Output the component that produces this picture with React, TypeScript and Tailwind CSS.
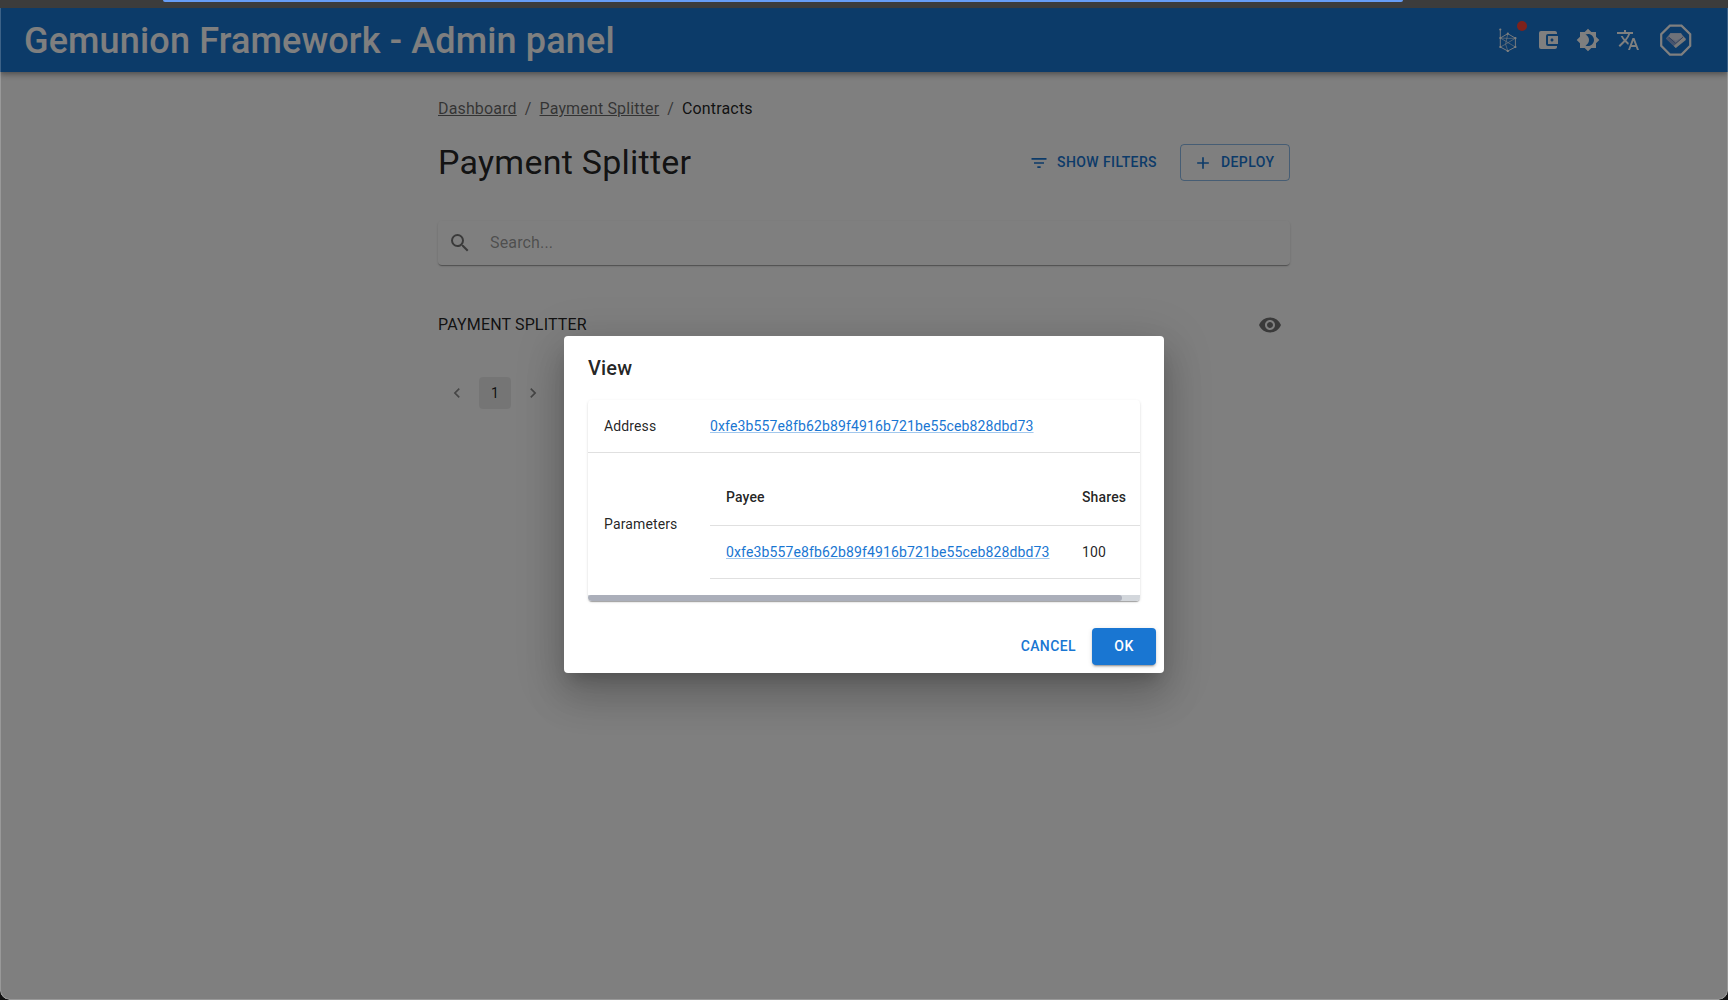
import React from "react";
import {
  MdAccountBalanceWallet,
  MdAdd,
  MdBrightness4,
  MdFilterList,
  MdNavigateBefore,
  MdNavigateNext,
  MdSearch,
  MdTranslate,
  MdVisibility,
} from "react-icons/md";

const ADDRESS = "0xfe3b557e8fb62b89f4916b721be55ceb828dbd73";

function NetworkIcon() {
  return (
    <svg viewBox="0 0 24 24" className="size-6" fill="none" stroke="white" strokeWidth="1">
      <path d="M4.3 1.5V19L11.8 23 19.4 19V10.2L11.8 5.7 4.3 10" strokeOpacity="0.9" />
      <path d="M11.8 5.7L9.6 16.2 4.3 19M4.3 10L19.4 19M19.4 10.2L9.6 16.2 11.8 23M4.3 10L12.6 10.4 19.4 10.2" strokeOpacity="0.75" strokeWidth="0.8" />
      <g fill="white" stroke="none">
        <circle cx="4.3" cy="1.5" r="1.1" />
        <circle cx="4.3" cy="10" r="1.1" />
        <circle cx="4.3" cy="19" r="1.1" />
        <circle cx="11.8" cy="23" r="1.1" />
        <circle cx="19.4" cy="19" r="1.1" />
        <circle cx="19.4" cy="10.2" r="1.1" />
        <circle cx="11.8" cy="5.7" r="1.1" />
      </g>
    </svg>
  );
}

function Avatar() {
  return (
    <svg viewBox="0 0 32 32" className="size-8">
      <path d="M9.9 1.6h11.6l8.7 8.7v11.6l-8.7 8.7H9.9l-8.7-8.7V10.3z" fill="none" stroke="white" strokeWidth="2.2" />
      <path d="M10.4 9.3h10.6l4.4 5.2-9.6 9.2-9.9-9.2z" fill="#c3cfea" />
      <path d="M10.4 9.3h10.6l1.8 4-7 3.2-7.2-3.2z" fill="#dfe5f2" />
      <path d="M5.9 14.5l2.8-1.6 9 8.4-2 2.6z" fill="#8fa9dc" />
      <path d="M15.8 24l-2-2 9.4-8.9 2.4 1.4.2 1.6z" fill="#f3f3f3" />
      <path d="M8.8 13.2l7 6.2 7.2-6.2" fill="none" stroke="#5878b4" strokeWidth="0.9" />
    </svg>
  );
}

function Header() {
  return (
    <header className="relative flex h-16 shrink-0 items-center justify-between bg-[#1976d2] pl-6 pr-9 text-white shadow-[0_2px_4px_-1px_rgba(0,0,0,.2),0_4px_5px_rgba(0,0,0,.14),0_1px_10px_rgba(0,0,0,.12)]">
      <h6 className="pt-px text-[36px] font-medium leading-[58px] tracking-[0.15px]">Gemunion Framework - Admin panel</h6>
      <div className="flex items-center gap-4">
        <div className="relative">
          <NetworkIcon />
          <span className="absolute -right-[7px] -top-[7px] size-2.5 rounded-full bg-[#fb4438]" />
        </div>
        <MdAccountBalanceWallet className="size-6" />
        <MdBrightness4 className="size-6" />
        <MdTranslate className="size-6" />
        <div className="ml-1">
          <Avatar />
        </div>
      </div>
    </header>
  );
}

function AddressLink() {
  return (
    <a className="text-[#1976d2] underline decoration-[#1976d2]/40" href="#address">
      {ADDRESS}
    </a>
  );
}

function ViewDialog() {
  return (
    <div className="flex w-[600px] flex-col rounded bg-white text-black/87 shadow-[0_11px_15px_-7px_rgba(0,0,0,.2),0_24px_38px_3px_rgba(0,0,0,.14),0_9px_46px_8px_rgba(0,0,0,.12)]">
      <h2 className="px-6 py-4 text-xl font-medium leading-8 tracking-[0.15px]">View</h2>
      <div className="px-6 pb-[19px]">
        <div className="overflow-hidden rounded text-sm leading-5 tracking-[0.13px] shadow-[0_2px_1px_-1px_rgba(0,0,0,.2),0_1px_1px_rgba(0,0,0,.14),0_1px_3px_rgba(0,0,0,.12)]">
          <div className="flex h-[53px] items-center border-b border-[#e0e0e0]">
            <div className="w-[106px] shrink-0 pl-4">Address</div>
            <div className="pl-4">
              <AddressLink />
            </div>
          </div>
          <div className="flex items-center">
            <div className="w-[106px] shrink-0 pl-4">Parameters</div>
            <div className="grow py-4 pl-4">
              <div className="flex h-[57px] items-center border-b border-[#e0e0e0] font-medium">
                <div className="w-[356px] shrink-0 pl-4">Payee</div>
                <div className="pl-4">Shares</div>
              </div>
              <div className="flex h-[53px] items-center border-b border-[#e0e0e0]">
                <div className="w-[356px] shrink-0 pl-4">
                  <AddressLink />
                </div>
                <div className="pl-4">100</div>
              </div>
            </div>
          </div>
          <div className="h-1.5 bg-[#d3d7dc]">
            <div className="h-1.5 w-[534px] rounded-full bg-[#abafba]" />
          </div>
        </div>
      </div>
      <div className="flex items-center justify-end gap-2 p-2 text-sm font-medium leading-[24.5px] tracking-[0.4px]">
        <button className="px-2 py-1.5 text-[#1976d2]">CANCEL</button>
        <button className="w-16 rounded bg-[#1976d2] py-1.5 text-white shadow-[0_3px_1px_-2px_rgba(0,0,0,.2),0_2px_2px_rgba(0,0,0,.14),0_1px_5px_rgba(0,0,0,.12)]">
          OK
        </button>
      </div>
    </div>
  );
}

export default function App() {
  return (
    <div className="h-[1000px] w-[1728px] overflow-hidden bg-[#111]">
      <div className="flex h-full flex-col overflow-hidden rounded-b-[10px] font-[Roboto,sans-serif]">
        <div className="h-2 shrink-0 bg-[#3c3c3c] pl-[163px]">
          <div className="h-[2px] w-[1240px] rounded-b-md bg-[#669df6]" />
        </div>
        <div className="relative flex grow flex-col overflow-hidden rounded-b-[10px] bg-white">
          <Header />
          <main className="mx-auto w-[852px] pt-[25px] text-black/87">
            <nav className="flex leading-6 tracking-[0.15px] text-black/60">
              <a className="underline" href="#dashboard">Dashboard</a>
              <span className="mx-2">/</span>
              <a className="underline" href="#splitter">Payment Splitter</a>
              <span className="mx-2">/</span>
              <span className="text-black/87">Contracts</span>
            </nav>
            <div className="mt-[15px] flex h-[53px] items-center justify-between">
              <h4 className="pb-0.5 text-[34px] leading-[42px] tracking-[0.25px]">Payment Splitter</h4>
              <div className="flex items-center gap-[15px] text-sm font-medium leading-[24.5px] tracking-[0.4px] text-[#1976d2]">
                <button className="flex items-center gap-2 px-2 py-1.5">
                  <MdFilterList className="size-5" />
                  SHOW FILTERS
                </button>
                <button className="flex h-[37px] w-[110px] items-center gap-2 rounded border border-[#1976d2]/50 pl-3">
                  <MdAdd className="size-5" />
                  DEPLOY
                </button>
              </div>
            </div>
            <div className="mt-8 flex h-11 items-center rounded shadow-[0_2px_1px_-1px_rgba(0,0,0,.2),0_1px_1px_rgba(0,0,0,.14),0_1px_3px_rgba(0,0,0,.12)]">
              <MdSearch className="ml-2.5 size-6 text-black/54" />
              <span className="ml-[18px] tracking-[0.15px] text-black/40">Search...</span>
            </div>
            <div className="mt-8 flex h-14 items-center justify-between pr-2">
              <span className="leading-6 tracking-[0.15px]">PAYMENT SPLITTER</span>
              <MdVisibility className="size-6 text-black/54" />
            </div>
            <div className="mt-6 flex h-8 items-center text-sm">
              <MdNavigateBefore className="ml-[9px] size-5 text-black/45" />
              <span className="ml-3 flex size-8 items-center justify-center rounded bg-black/8">1</span>
              <MdNavigateNext className="ml-3 size-5 text-black/45" />
            </div>
          </main>
          <div className="absolute inset-0 flex items-center justify-center rounded-b-[10px] border-x border-b border-white/20 bg-black/50 pt-[1.5px]">
            <ViewDialog />
          </div>
        </div>
      </div>
    </div>
  );
}
